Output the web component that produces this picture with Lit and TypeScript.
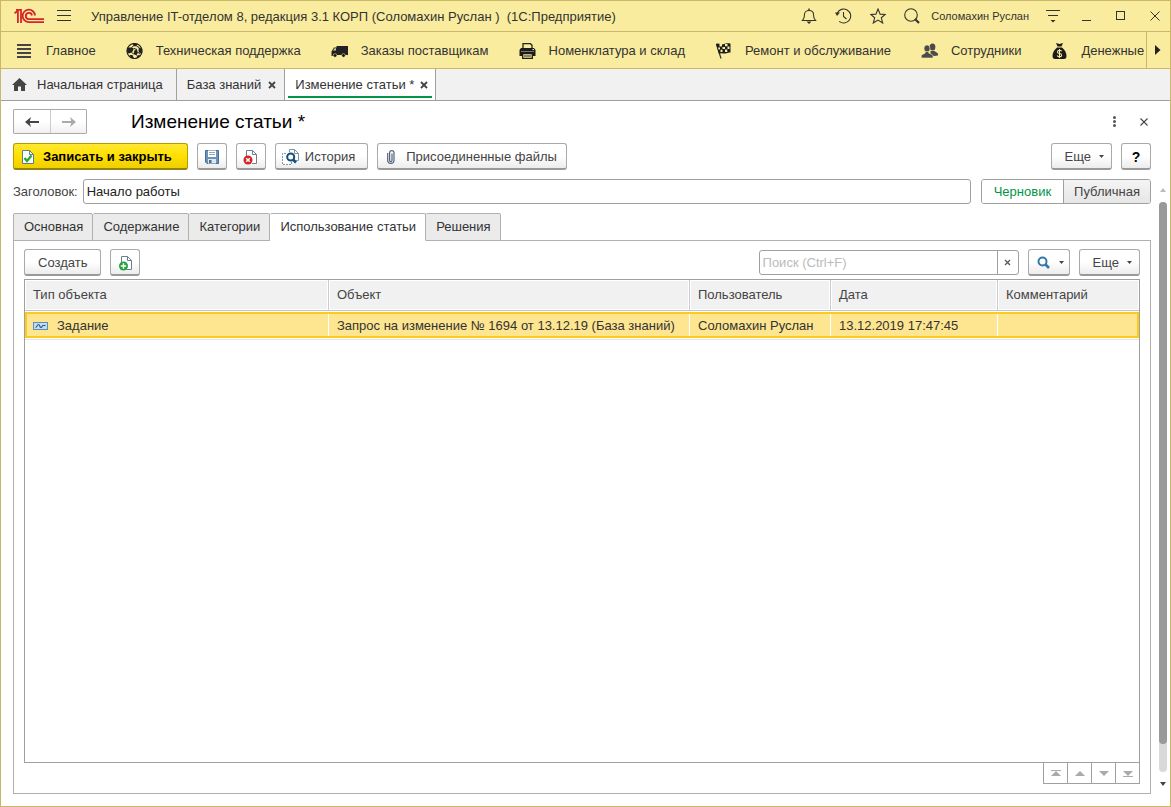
import { LitElement, html, css, svg, TemplateResult } from "lit";
import { customElement, state } from "lit/decorators.js";
import { classMap } from "lit/directives/class-map.js";

const icon = (w: number, h: number, body: TemplateResult | unknown) =>
  html`<svg width=${w} height=${h} viewBox="0 0 ${w} ${h}" fill="none" aria-hidden="true">${body}</svg>`;

const ICONS = {
  logo: icon(30, 16, svg`
    <g stroke="#d8232a" stroke-width="1.800">
      <path d="M.5 5.300L3.900 2.800V15"/>
      <path d="M2 1.900H7V15"/>
      <path d="M21 7.500A6.200 6.200 0 1 0 15 14.100H30"/>
      <path d="M18 7.500A3.100 3.100 0 1 0 15 11.100H30"/>
    </g>`),
  menu: icon(14, 12, svg`<path d="M0 .5H14M0 5.500H14M0 10.500H14" stroke="#333"/>`),
  bell: icon(16, 16, svg`
    <path d="M1.500 12.500C3.500 10.500 3.500 9 3.500 6.500C3.500 4 5.500 2.500 8 2.500S12.500 4 12.500 6.500C12.500 9 12.500 10.500 14.500 12.500Z" stroke="#333" stroke-width="1.100"/>
    <path d="M8 0.500V2.500" stroke="#333" stroke-width="1.400"/>
    <path d="M5.500 13.500H10.500L8 16Z" fill="#333"/>`),
  history: icon(17, 16, svg`
    <path d="M2.300 5.200A7 7 0 1 1 4.200 13.400" stroke="#333" stroke-width="1.100"/>
    <path d="M0 4.500H5L2 8Z" fill="#333"/>
    <path d="M8.500 4V8.500L11.500 11" stroke="#333" stroke-width="1.100"/>`),
  star: icon(16, 16, svg`<path d="M8 1L10.100 6.100L15.300 6.400L11.300 9.800L12.700 15L8 12.100L3.300 15L4.700 9.800L.7 6.400L5.900 6.100Z" stroke="#333" stroke-width="1.100"/>`),
  find: icon(16, 16, svg`
    <circle cx="7" cy="7" r="6.300" stroke="#333" stroke-width="1.100"/>
    <path d="M11 11L15 15" stroke="#333" stroke-width="2.200"/>`),
  service: icon(14, 14, svg`
    <path d="M0 1.500H14M2 6.500H12" stroke="#333"/><path d="M4.500 11H9.500L7 13.500Z" fill="#333"/>`),
  minimize: icon(10, 10, svg`<path d="M0 9.500H9" stroke="#333"/>`),
  maximize: icon(10, 10, svg`<rect x=".5" y=".5" width="8" height="8" stroke="#333"/>`),
  close: icon(10, 10, svg`<path d="M.5 .5L9.500 9.500M9.500 .5L.5 9.500" stroke="#333"/>`),
  smallClose: icon(8, 8, svg`<path d="M.5 .5L7.500 7.500M7.500 .5L.5 7.500" stroke="#444" stroke-width="1.100"/>`),
  tabClose: icon(8, 8, svg`<path d="M1 1L7 7M7 1L1 7" stroke="#444" stroke-width="1.800"/>`),
  main: icon(17, 16, svg`<path d="M1 2H15M1 6H15M1 10H15M1 14H15" stroke="#444" stroke-width="2"/>`),
  support: icon(17, 16, svg`
    <circle cx="8.500" cy="8" r="7.500" fill="#faec9e" stroke="#222" stroke-width="1.200"/>
    <path d="M6.500 .8H12L10.300 3.200H7.600Z M12.800 4.200L16.200 6V10L14 10.500L12.500 8Z M5.500 4.500L8 5.500L6 9.500L2.500 10.500L.8 8.500L1.500 4.500Z M10.800 6.500L12 9.500L10.500 12.300L7.500 11.300L8.300 7.500Z M3.500 12L6.500 12L8 15.500L5 15Z M11.500 12.500L14.500 11.500L12.500 14.500L10 15.500Z" fill="#222"/>
    <path d="M7.500 3L5.500 4.500M10.500 3L13 4.500M8 5.500L11 6.500M6 9.500L7.500 11.300M12 9.500L14 10.500M10.500 12.300L11.500 13" stroke="#222"/>`),
  truck: icon(17, 16, svg`
    <path d="M5.500 3H17V12H5.500Z M.5 8.500L3 4.500H6V13H.5Z" fill="#222"/>
    <path d="M2 7.500L3.600 5.300H5V7.500Z" fill="#d8ca88"/>
    <circle cx="4" cy="12.500" r="1.800" fill="#111" stroke="#faec9e" stroke-width=".6"/>
    <circle cx="12.500" cy="12.500" r="1.800" fill="#111" stroke="#faec9e" stroke-width=".6"/>`),
  printer: icon(17, 16, svg`
    <path d="M4 6V.7H11.500L13 2.200V6" stroke="#222" stroke-width="1.300"/>
    <path d="M2 5H15L16.500 7V13H.5V7Z" fill="#1c1c1c"/>
    <path d="M2 8.500H15" stroke="#777"/><path d="M13.500 6.500H15" stroke="#faec9e"/>
    <path d="M3.700 10.700H13.300V15.300H3.700Z" fill="#faec9e" stroke="#1c1c1c" stroke-width="1.300"/>
    <path d="M5 13H12" stroke="#1c1c1c"/>`),
  flag: icon(17, 16, svg`
    <path d="M1.500 1L6 15.500" stroke="#333" stroke-width="1.200"/>
    <path d="M1 1C4 -.5 5.500 2 8.500 1.200S13 0 15.500 .7L15.500 9.500C13 9 12 10.500 9.500 10.500S6 9.500 4 11Z" fill="#1c1c1c"/>
    <path d="M4.500 1H7V3.500H4.500Z M10 1H12.500V3.300H10Z M7.500 4H10V6H7.500Z M12.500 3.500H14.500V6H12.500Z M3 4.500H5V6.500H3.500Z M5.500 6.800H7.500V9H5.500Z M10 6.500H12.300V9H10Z" fill="#faec9e"/>`),
  people: icon(17, 16, svg`
    <g fill="#4a4a4a"><ellipse cx="11.500" cy="4" rx="2.900" ry="3.500"/>
    <path d="M9.500 14V8L13.500 8L17 10.500V12.500L13 13Z"/></g>
    <g fill="#4a4a4a" stroke="#faec9e" stroke-width=".6"><ellipse cx="6" cy="5.500" rx="3" ry="3.600"/>
    <path d="M.3 15V12.200L4.300 10V8.500H7.700V10L12 12.200V15Z"/></g>`),
  money: icon(17, 16, svg`
    <path d="M5 0L8.500 1L12 0L10.500 3.500H6.500Z M6 4.500H11C14 7 15.500 10 15.500 13Q15.500 16 13 16H4Q1.500 16 1.500 13C1.500 10 3 7 6 4.500Z" fill="#1c1c1c"/>
    <path d="M10.700 8.300Q10 7.300 8.500 7.300Q6.500 7.300 6.500 8.900T8.500 10.500T10.600 12.200T8.500 13.600Q6.800 13.600 6.200 12.400M8.500 6V15" stroke="#faec9e" stroke-width="1.100"/>`),
  right: icon(6, 10, svg`<path d="M0 0L5.500 5L0 10Z" fill="#222"/>`),
  home: icon(15, 13, svg`<path d="M7.500 0L15 7H13V13H9V8.500H6V13H2V7H0Z" fill="#444"/>`),
  back: icon(14, 10, svg`<path d="M14 5H3" stroke="#444" stroke-width="2"/><path d="M6 0L0 5L6 10L4.500 5Z" fill="#444"/>`),
  forward: icon(14, 10, svg`<path d="M0 5H11" stroke="#aaa" stroke-width="2"/><path d="M8 0L14 5L8 10L9.500 5Z" fill="#aaa"/>`),
  dots: icon(3, 11, svg`<g fill="#555"><circle cx="1.500" cy="1.500" r="1.500"/><circle cx="1.500" cy="5.500" r="1.500"/><circle cx="1.500" cy="9.500" r="1.500"/></g>`),
  saveClose: icon(14, 16, svg`
    <path d="M1.500 1.500H8.500L12.500 5.500V14.500H1.500Z" fill="#fdfdf4" stroke="#5e7c8c"/>
    <path d="M8.500 1.500V5.500H12.500" stroke="#5e7c8c"/>
    <path d="M3.500 9L6 12L10.500 6.500" stroke="#23a33c" stroke-width="2.200"/>`),
  disk: icon(16, 16, svg`
    <path d="M1.500 1.500H14.500V14.500H3L1.500 13Z" fill="#6b93ba" stroke="#476b91"/>
    <path d="M4 1.500H12V8H4Z" fill="#fff"/><path d="M5 3.500H11M5 5.500H11" stroke="#8fa9c3"/>
    <path d="M4 10H12V14.500H4Z" fill="#dfe7ee"/><path d="M5 11H7.500V14H5Z" fill="#476b91"/>`),
  docRemove: icon(16, 16, svg`
    <path d="M3.500 9V1.500H9.500L13.500 5.500V14.500H9" fill="#fff" stroke="#6a8090"/>
    <path d="M9.500 1.500V5.500H13.500" stroke="#6a8090"/>
    <circle cx="5" cy="11" r="4.500" fill="#d3222a"/>
    <path d="M3.200 9.200L6.800 12.800M6.800 9.200L3.200 12.800" stroke="#fff" stroke-width="1.400"/>`),
  docHistory: icon(17, 16, svg`
    <path d="M7.500 3V.5H12.500L16.500 4.500V11.500H14" fill="#fff" stroke="#8597a3"/>
    <path d="M12.500 .5V4.500H16.500" stroke="#8597a3"/>
    <path d="M4 4.500H.5V15.500H9.500V13" fill="#fff" stroke="#8597a3" stroke-dasharray="2 1"/>
    <circle cx="8.700" cy="8" r="3.500" fill="#fff" stroke="#0f4f80" stroke-width="2"/>
    <path d="M11 10.500L14 13.500" stroke="#0f4f80" stroke-width="2.600"/>`),
  clip: icon(8, 16, svg`
    <path d="M.7 4V12A3.200 3 0 0 0 7 12V3.200A2.300 2.300 0 0 0 2.600 3.200V11.500A1.200 1.200 0 0 0 5 11.500V4.500" stroke="#51617a" stroke-width="1.200"/>`),
  docAdd: icon(16, 16, svg`
    <path d="M4.500 7V1.500H10.500L14.500 5.500V14.500H9.500" fill="#fff" stroke="#6a8090"/>
    <path d="M10.500 1.500V5.500H14.500" stroke="#6a8090"/>
    <circle cx="6.500" cy="11" r="4.500" fill="#27a043"/>
    <path d="M3.800 11H9.200M6.500 8.300V13.700" stroke="#fff" stroke-width="1.400"/>`),
  down: icon(5, 3, svg`<path d="M0 0H5L2.500 3Z" fill="#444"/>`),
  lens: icon(14, 14, svg`
    <circle cx="5.500" cy="5.500" r="4" stroke="#3179ad" stroke-width="2"/>
    <path d="M8.500 8.500L12 12" stroke="#3179ad" stroke-width="2.600"/>`),
  clear: icon(7, 7, svg`<path d="M1 1L6 6M6 1L1 6" stroke="#555" stroke-width="1.200"/>`),
  task: icon(15, 8, svg`
    <rect x=".5" y=".5" width="14" height="7" fill="#c4dcf0" stroke="#5f8db5"/>
    <path d="M2.500 5.500C4 5.500 4 2.500 5.500 2.500S6.500 5.500 8 5.500S9 3.500 10 3.500H12.500" stroke="#1e5b8e" stroke-width="1.100"/>`),
  first: icon(10, 7, svg`<path d="M0 .5H10" stroke="#aaa"/><path d="M5 1L10 6H0Z" fill="#aaa"/>`),
  up: icon(10, 7, svg`<path d="M5 1L10 6H0Z" fill="#aaa"/>`),
  next: icon(10, 7, svg`<path d="M5 6L0 1H10Z" fill="#aaa"/>`),
  last: icon(10, 7, svg`<path d="M0 6.500H10" stroke="#aaa"/><path d="M5 6L0 1H10Z" fill="#aaa"/>`),
  scrollUp: icon(6, 4, svg`<path d="M3 0L6 4H0Z" fill="#bbb"/>`),
  scrollDown: icon(6, 4, svg`<path d="M3 4L0 0H6Z" fill="#444"/>`),
};

const base = css`
  *, *::before, *::after { box-sizing: border-box; }
  svg { display: block; flex: none; }
  button, input, a {
    font: inherit;
    color: inherit;
    margin: 0;
    padding: 0;
    border: 0;
    background: none;
    text-decoration: none;
  }
  button { white-space: nowrap; }
`;

@customElement("app-titlebar")
export class AppTitlebar extends LitElement {
  static styles = [base, css`
    :host { display: block; background: #faec9e; color: #333; }
    .bar {
      display: flex; align-items: center; height: 31px;
      padding: 0 10px 0 13px; border-bottom: 1px solid #c9b868;
    }
    .menu { margin: 0 20px 0 13px; }
    .title { flex: 1; padding-top: 1px; white-space: pre; overflow: hidden; }
    .tools { display: flex; align-items: center; gap: 18px; }
    .user { font-size: 11px; margin: 0 17px 0 11px; white-space: nowrap; }
    .window { display: flex; align-items: center; gap: 24px; margin-left: 22px; }
    .sections { display: flex; height: 37px; border-bottom: 1px solid #c9b868; }
    .list { display: flex; flex: 1; gap: 30px; padding: 1px 0 0 15px; overflow: hidden; }
    .section { display: flex; flex: none; align-items: center; gap: 13px; white-space: nowrap; }
    .more { width: 24px; padding-left: 8px; border-left: 1px solid #c9b868; }
  `];

  private sections: [unknown, string][] = [
    [ICONS.main, "Главное"],
    [ICONS.support, "Техническая поддержка"],
    [ICONS.truck, "Заказы поставщикам"],
    [ICONS.printer, "Номенклатура и склад"],
    [ICONS.flag, "Ремонт и обслуживание"],
    [ICONS.people, "Сотрудники"],
    [ICONS.money, "Денежные"],
  ];

  render() {
    return html`
      <header class="bar">
        ${ICONS.logo}
        <button class="menu" aria-label="Меню">${ICONS.menu}</button>
        <span class="title">Управление IT-отделом 8, редакция 3.1 КОРП (Соломахин Руслан )  (1С:Предприятие)</span>
        <div class="tools">
          <button aria-label="Уведомления">${ICONS.bell}</button>
          <button aria-label="История">${ICONS.history}</button>
          <button aria-label="Избранное">${ICONS.star}</button>
          <button aria-label="Поиск">${ICONS.find}</button>
        </div>
        <a class="user" href="#">Соломахин Руслан</a>
        <button aria-label="Сервис">${ICONS.service}</button>
        <div class="window">
          <button aria-label="Свернуть">${ICONS.minimize}</button>
          <button aria-label="Развернуть">${ICONS.maximize}</button>
          <button aria-label="Закрыть">${ICONS.close}</button>
        </div>
      </header>
      <nav class="sections">
        <div class="list">
          ${this.sections.map(([glyph, name]) => html`<a class="section" href="#">${glyph}${name}</a>`)}
        </div>
        <button class="more" aria-label="Прокрутить разделы">${ICONS.right}</button>
      </nav>`;
  }
}

@customElement("app-open-tabs")
export class AppOpenTabs extends LitElement {
  static styles = [base, css`
    :host { display: flex; height: 32px; background: #f1f1f1; border-bottom: 1px solid #a0a0a0; color: #333; }
    .tab {
      display: flex; align-items: center; gap: 7px;
      padding: 0 8px 0 10px; border-right: 1px solid #a0a0a0; white-space: nowrap;
    }
    .home { gap: 10px; padding: 0 13px 0 11px; }
    .active { padding: 0 3px; background: #fff; }
    .line {
      display: flex; align-items: center; gap: 6px; align-self: stretch;
      margin: 0 0 2px; padding: 4px 4px 0 7px; border-bottom: 2px solid #009646;
    }
  `];

  render() {
    return html`
      <a class="tab home" href="#">${ICONS.home}Начальная страница</a>
      <div class="tab"><a href="#">База знаний</a><button aria-label="Закрыть">${ICONS.tabClose}</button></div>
      <div class="tab active">
        <div class="line"><a href="#">Изменение статьи *</a><button aria-label="Закрыть">${ICONS.tabClose}</button></div>
      </div>`;
  }
}

@customElement("app-root")
export class AppRoot extends LitElement {
  static styles = [base, css`
    :host {
      display: flex; flex-direction: column; box-sizing: border-box; height: 100vh;
      border: 1px solid #c9b868; background: #fff; color: #444;
      font: 13px/16px "Liberation Sans", Arial, sans-serif;
    }
    .head { display: flex; align-items: center; padding: 8px 22px 0 12px; }
    .arrows { display: flex; height: 25px; border: 1px solid #aaa; border-radius: 1px; background: linear-gradient(#fff 50%, #f0f0f0); }
    .arrow { display: flex; align-items: center; justify-content: center; width: 36px; }
    .arrow + .arrow { border-left: 1px solid #ccc; }
    h1 { flex: 1; margin: 0 0 0 44px; font-size: 19px; line-height: 25px; font-weight: normal; color: #000; }
    .corner { display: flex; align-items: center; gap: 24px; }
    .commands { display: flex; gap: 9px; padding: 9px 19px 0 12px; }
    .btn {
      display: flex; align-items: center; justify-content: center; height: 27px; min-width: 30px;
      padding-top: 1px;
      border: 1px solid #aaa; border-bottom: 2px solid #999; border-radius: 3px;
      background: linear-gradient(#fff 50%, #ececec);
    }
    .text { padding: 1px 13px 0; }
    .primary {
      gap: 8px; padding: 1px 15px 0 7px; font-weight: bold; color: #000;
      border-color: #b39d00; border-bottom-color: #94820f;
      background: linear-gradient(#ffe833, #ffe000 50%, #efcf00);
    }
    .history { gap: 6px; padding: 1px 12px 0 6px; }
    .attach { gap: 11px; padding: 1px 9px 0 9px; }
    .more { gap: 8px; padding: 1px 7px 0 13px; }
    .help { color: #000; font-size: 14px; font-weight: bold; }
    .lens { gap: 8px; padding: 1px 5px 0 8px; }
    .push { margin-left: auto; }
    .body { display: flex; flex: 1; gap: 8px; min-height: 0; padding: 9px 3px 0 12px; }
    .content { display: flex; flex: 1; flex-direction: column; min-width: 0; padding-bottom: 12px; }
    .field { display: flex; align-items: center; }
    .field-input {
      flex: 1; min-width: 0; height: 25px; margin: 0 10px 0 5px; padding: 0 3px;
      border: 1px solid #a0a0a0; border-radius: 3px; color: #222;
    }
    .switch { display: flex; height: 25px; border: 1px solid #a0a0a0; border-radius: 3px; overflow: hidden; }
    .option { display: flex; align-items: center; padding: 0 12px; background: linear-gradient(#f4f4f4, #e6e6e6); }
    .option + .option { padding: 0 10px; border-left: 1px solid #a0a0a0; }
    .option.on { background: #fff; color: #009646; }
    .option:focus-within { text-decoration: underline; }
    .radio { position: absolute; width: 1px; height: 1px; opacity: 0; appearance: none; }
    .pages { display: flex; margin-top: 9px; position: relative; z-index: 1; }
    .page {
      height: 28px; padding: 0 9px 0 10px; color: #333; background: #ebebeb;
      border: 1px solid #b0b0b0; border-left-width: 0; border-radius: 2px 2px 0 0;
    }
    .page:first-child { border-left-width: 1px; }
    .page.on { background: #fff; border-bottom-color: #fff; }
    .panel {
      display: flex; flex: 1; flex-direction: column; min-height: 0;
      margin-top: -1px; padding: 8px 10px 9px; border: 1px solid #b0b0b0;
    }
    .tools { display: flex; align-items: center; gap: 9px; margin-bottom: 3px; }
    .search { display: flex; width: 260px; height: 25px; border: 1px solid #a0a0a0; border-radius: 3px; }
    .search-input { flex: 1; min-width: 0; padding: 0 3px; color: #222; }
    .search-input::placeholder { color: #bbb; opacity: 1; }
    .clear { display: flex; align-items: center; justify-content: center; width: 21px; border-left: 1px solid #a0a0a0; }
    .grid { flex: 1; min-height: 0; overflow: hidden; border: 1px solid #a0a0a0; }
    table { width: 100%; table-layout: fixed; border-collapse: separate; border-spacing: 0; }
    .c-type { width: 304px; }
    .c-user { width: 141px; }
    .c-date { width: 167px; }
    .c-note { width: 141px; }
    th {
      height: 31px; padding: 0 8px; text-align: left; font-weight: normal;
      background: #f1f1f1; border-right: 1px solid #ccc; border-bottom: 1px solid #c4c4c4;
      box-shadow: inset 0 0 0 1px #fff; white-space: nowrap;
    }
    th:last-child { border-right: 0; }
    .spacer { height: 1px; padding: 0; }
    .row td {
      height: 26px; padding: 2px 8px 0; color: #333; background: #fee590; white-space: nowrap;
      border: 0 solid #fcc91f; border-width: 2px 0; background-clip: padding-box;
      box-shadow: inset -1px 0 0 #fff;
    }
    .row td:first-child { border-left-width: 2px; padding-left: 6px; }
    .row td:last-child { border-right-width: 2px; box-shadow: none; }
    .rule { height: 2px; padding: 0; border-bottom: 1px solid #e4e4e4; }
    .kind { display: flex; align-items: center; gap: 9px; }
    .pager { display: flex; align-self: flex-end; height: 22px; margin-top: -1px; border: 1px solid #a0a0a0; }
    .step { display: flex; align-items: center; justify-content: center; width: 24px; }
    .step:first-child { width: 23px; }
    .step + .step { border-left: 1px solid #a0a0a0; }
    .scroll { display: flex; flex-direction: column; align-items: center; width: 8px; padding: 9px 0 20px; }
    .track { flex: 1; width: 8px; margin: 10px 0; border-radius: 4px; background: #d9d9d9; }
    .thumb { height: 95%; border-radius: 4px; background: #999; }
  `];

  @state() private page = 3;
  @state() private draft = true;

  private pages = ["Основная", "Содержание", "Категории", "Использование статьи", "Решения"];

  private option(label: string, draft: boolean) {
    const on = this.draft === draft;
    return html`<label class=${classMap({ option: true, on })}>
      <input class="radio" type="radio" name="status" .checked=${on} @change=${() => (this.draft = draft)}>${label}</label>`;
  }

  render() {
    return html`
      <app-titlebar></app-titlebar>
      <app-open-tabs></app-open-tabs>
      <div class="head">
        <div class="arrows">
          <button class="arrow" aria-label="Назад">${ICONS.back}</button>
          <button class="arrow" aria-label="Вперед">${ICONS.forward}</button>
        </div>
        <h1>Изменение статьи *</h1>
        <div class="corner">
          <button aria-label="Дополнительно">${ICONS.dots}</button>
          <button aria-label="Закрыть">${ICONS.smallClose}</button>
        </div>
      </div>
      <div class="commands">
        <button class="btn primary">${ICONS.saveClose}Записать и закрыть</button>
        <button class="btn" aria-label="Записать">${ICONS.disk}</button>
        <button class="btn" aria-label="Удалить">${ICONS.docRemove}</button>
        <button class="btn history">${ICONS.docHistory}История</button>
        <button class="btn attach">${ICONS.clip}Присоединенные файлы</button>
        <button class="btn more push">Еще${ICONS.down}</button>
        <button class="btn help">?</button>
      </div>
      <div class="body">
        <main class="content">
          <div class="field">
            <label for="caption">Заголовок:</label>
            <input class="field-input" id="caption" type="text" value="Начало работы">
            <div class="switch" role="radiogroup" aria-label="Статус">
              ${this.option("Черновик", true)}${this.option("Публичная", false)}
            </div>
          </div>
          <div class="pages" role="tablist">
            ${this.pages.map((name, i) => html`<button role="tab" aria-selected=${i === this.page}
              class=${classMap({ page: true, on: i === this.page })} @click=${() => (this.page = i)}>${name}</button>`)}
          </div>
          <section class="panel">
            <div class="tools">
              <button class="btn text">Создать</button>
              <button class="btn" aria-label="Добавить">${ICONS.docAdd}</button>
              <div class="search push">
                <input class="search-input" type="text" placeholder="Поиск (Ctrl+F)" aria-label="Поиск">
                <button class="clear" aria-label="Очистить">${ICONS.clear}</button>
              </div>
              <button class="btn lens" aria-label="Найти">${ICONS.lens}${ICONS.down}</button>
              <button class="btn more">Еще${ICONS.down}</button>
            </div>
            <div class="grid">
              <table>
                <colgroup><col class="c-type"><col><col class="c-user"><col class="c-date"><col class="c-note"></colgroup>
                <thead>
                  <tr><th>Тип объекта</th><th>Объект</th><th>Пользователь</th><th>Дата</th><th>Комментарий</th></tr>
                </thead>
                <tbody>
                  <tr><td class="spacer" colspan="5"></td></tr>
                  <tr class="row">
                    <td><div class="kind">${ICONS.task}Задание</div></td>
                    <td>Запрос на изменение № 1694 от 13.12.19 (База знаний)</td>
                    <td>Соломахин Руслан</td>
                    <td>13.12.2019 17:47:45</td>
                    <td></td>
                  </tr>
                  <tr><td class="rule" colspan="5"></td></tr>
                </tbody>
              </table>
            </div>
            <div class="pager">
              <button class="step" aria-label="В начало">${ICONS.first}</button>
              <button class="step" aria-label="Вверх">${ICONS.up}</button>
              <button class="step" aria-label="Вниз">${ICONS.next}</button>
              <button class="step" aria-label="В конец">${ICONS.last}</button>
            </div>
          </section>
        </main>
        <div class="scroll" aria-hidden="true">
          ${ICONS.scrollUp}<div class="track"><div class="thumb"></div></div>${ICONS.scrollDown}
        </div>
      </div>`;
  }
}
